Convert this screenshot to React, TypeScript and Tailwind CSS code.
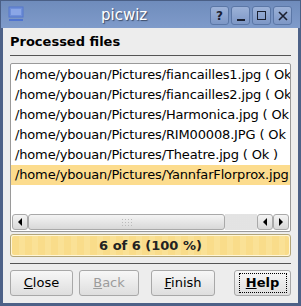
import React from "react";

const rows = [
  "/home/ybouan/Pictures/fiancailles1.jpg ( Ok )",
  "/home/ybouan/Pictures/fiancailles2.jpg ( Ok )",
  "/home/ybouan/Pictures/Harmonica.jpg ( Ok )",
  "/home/ybouan/Pictures/RIM00008.JPG ( Ok )",
  "/home/ybouan/Pictures/Theatre.jpg ( Ok )",
  "/home/ybouan/Pictures/YannfarFlorprox.jpg ( Ok )",
];

function TitleBtn({ children }: { children: React.ReactNode }) {
  return (
    <div className="w-[19px] h-[19px] rounded-[3px] border border-[#5b77a6] bg-gradient-to-b from-[#9cb2d8] to-[#7d97c6] flex items-center justify-center text-[#1a2030]">
      {children}
    </div>
  );
}

function Arrow({ dir }: { dir: "l" | "r" }) {
  return (
    <svg width="6" height="8" viewBox="0 0 6 8">
      {dir === "l" ? <path d="M5 0 L1 4 L5 8 Z" fill="#000" /> : <path d="M1 0 L5 4 L1 8 Z" fill="#000" />}
    </svg>
  );
}

function Btn({ children, disabled, focus, w }: { children: React.ReactNode; disabled?: boolean; focus?: boolean; w: string }) {
  return (
    <div className={`${w} h-[26px] rounded-[3px] border border-[#a8a8a8] bg-gradient-to-b from-[#f7f7f7] to-[#dedede] flex items-center justify-center text-[13px] ${disabled ? "text-[#9c9c9c]" : "text-black"}`}>
      {focus ? (
        <div className="border border-dotted border-black px-[4px] h-[20px] flex items-center w-[48px] justify-center">{children}</div>
      ) : (
        children
      )}
    </div>
  );
}

export default function App() {
  return (
    <div className="w-[301px] h-[306px] bg-[#4d6187] flex flex-col overflow-hidden" style={{ fontFamily: '"DejaVu Sans", sans-serif' }}>
      {/* title bar */}
      <div className="h-[28px] shrink-0 bg-gradient-to-b from-[#6f8cbc] to-[#7f9bca] flex items-center relative border-x border-t border-[#4a5f86]">
        <div className="absolute left-[7px] top-[5px]">
          <svg width="16" height="16" viewBox="0 0 16 16">
            <rect x="1" y="1" width="14" height="10" fill="#6f8fd8" stroke="#5577cc" />
            <rect x="3" y="3" width="10" height="6" fill="#8aa6e6" />
            <rect x="1" y="13" width="14" height="2" fill="#4f74cf" />
          </svg>
        </div>
        <div className="absolute left-[100px] top-0 h-[28px] flex items-center">
          <span className="text-white text-[15px]" style={{ textShadow: "1px 1px 1px #3a4a66" }}>picwiz</span>
        </div>
        <div className="absolute right-[8px] top-[5px] flex gap-[2px]">
          <TitleBtn><span className="text-[12px] font-bold leading-none">?</span></TitleBtn>
          <TitleBtn><div className="w-[8px] h-[2px] bg-[#1a2030] mt-[8px]" /></TitleBtn>
          <TitleBtn><div className="w-[9px] h-[9px] border-[1.5px] border-[#1a2030]" /></TitleBtn>
          <TitleBtn>
            <svg width="10" height="10" viewBox="0 0 10 10"><path d="M1 1 L9 9 M9 1 L1 9" stroke="#1a2030" strokeWidth="1.6" /></svg>
          </TitleBtn>
        </div>
      </div>
      {/* body */}
      <div className="flex-1 mx-[3px] mb-[3px] bg-[#ededed] px-[7px] flex flex-col">
        <div className="h-[17px] mt-[5px] text-[13px] font-bold text-black leading-[17px]">Processed files</div>
        <div className="mt-[5px] h-[1px] bg-[#555] " />
        <div className="mt-[7px] h-[169px] border border-[#9a9a9a] bg-white flex flex-col rounded-[2px]">
          <div className="flex-1 pt-[1px] overflow-hidden">
            {rows.map((r, i) => (
              <div key={i} className={`h-[20px] leading-[20px] text-[13px] tracking-[-0.15px] whitespace-nowrap pl-[4px] text-black ${i === 5 ? "bg-[#fcdc8e]" : ""}`}>
                {r}
              </div>
            ))}
          </div>
          <div className="h-[16px] mx-[1px] mb-[1px] flex items-stretch">
            <div className="w-[16px] border border-[#a9a9a9] rounded-[3px] bg-gradient-to-b from-[#f4f4f4] to-[#d8d8d8] flex items-center justify-center"><Arrow dir="l" /></div>
            <div className="w-[197px] border border-[#a9a9a9] rounded-[3px] bg-gradient-to-b from-[#f4f4f4] to-[#d8d8d8] flex items-center justify-center">
              <div className="w-[12px] h-[8px] bg-[radial-gradient(#bbb_0.8px,transparent_1px)] bg-[length:3px_3px]" />
            </div>
            <div className="flex-1 bg-[#ececec] bg-[radial-gradient(#d8d8d8_0.6px,transparent_0.8px)] bg-[length:2px_2px]" />
            <div className="w-[16px] border border-[#a9a9a9] rounded-[3px] bg-gradient-to-b from-[#f4f4f4] to-[#d8d8d8] flex items-center justify-center"><Arrow dir="l" /></div>
            <div className="w-[16px] border border-[#a9a9a9] rounded-[3px] bg-gradient-to-b from-[#f4f4f4] to-[#d8d8d8] flex items-center justify-center"><Arrow dir="r" /></div>
          </div>
        </div>
        <div className="mt-[2px] h-[23px] border border-[#b3a67a] rounded-[3px] p-[1px] bg-[#fff6d8]">
          <div className="h-full rounded-[2px] bg-[repeating-linear-gradient(90deg,#f9dc8a_0px,#f9dc8a_7px,#fae196_7px,#fae196_13px)] flex items-center justify-center text-[13px] font-bold text-[#222]">
            6 of 6 (100 %)
          </div>
        </div>
        <div className="mt-[6px] h-[1px] bg-[#555]" />
        <div className="mt-[6px] flex items-center">
          <Btn w="w-[63px]"><span><u>C</u>lose</span></Btn>
          <div className="w-[6px]" />
          <Btn w="w-[60px]" disabled><span><u>B</u>ack</span></Btn>
          <div className="w-[12px]" />
          <Btn w="w-[64px]"><span><u>F</u>inish</span></Btn>
          <div className="w-[19px]" />
          <Btn w="w-[57px]" focus><span className="font-bold"><u>H</u>elp</span></Btn>
        </div>
      </div>
    </div>
  );
}
